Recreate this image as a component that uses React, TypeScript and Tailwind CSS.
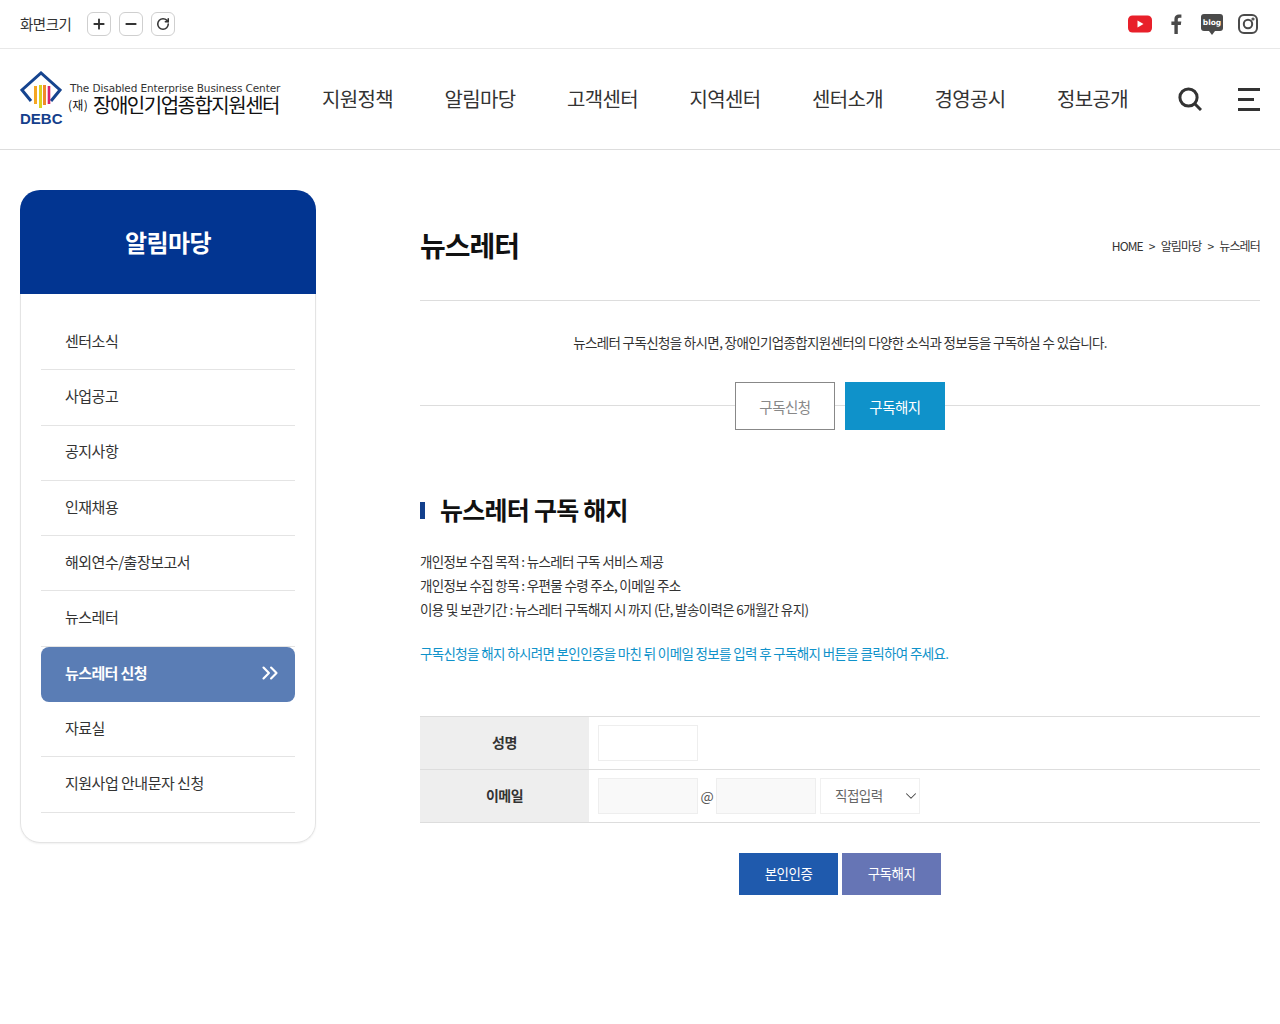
import { ChevronDown, ChevronsRight, Minus, Plus, RotateCw } from 'lucide-react';

const navItems = ['지원정책', '알림마당', '고객센터', '지역센터', '센터소개', '경영공시', '정보공개'];
const sideItems = [
  '센터소식',
  '사업공고',
  '공지사항',
  '인재채용',
  '해외연수/출장보고서',
  '뉴스레터',
  '뉴스레터 신청',
  '자료실',
  '지원사업 안내문자 신청',
];

const zoomBtn =
  'flex h-6 w-6 items-center justify-center rounded-md border border-[#cfcfcf] bg-white text-[#333]';
const inputCls = 'h-9 w-[100px] border border-[#eee]';

function Logo() {
  return (
    <div className="mt-[22px] flex w-[262px] items-start self-start">
      <div className="flex w-[44px] flex-col items-start">
        <svg width="42" height="42" viewBox="0 0 42 42" fill="none">
          <path d="M11 30 L2 19 L21 2 L40 19 L31 30" stroke="#16448f" strokeWidth="3" />
          <path d="M15.5 15 V33" stroke="#f5a623" strokeWidth="3" />
          <path d="M20.5 14 V37" stroke="#dcd21e" strokeWidth="3" />
          <path d="M24.5 14 V34" stroke="#f08a2c" strokeWidth="3" />
          <path d="M29 15 V33" stroke="#d6226f" strokeWidth="2.6" />
        </svg>
        <span className="-mt-[2px] font-['Liberation_Sans',sans-serif] text-[15px] leading-[15px] font-black text-[#153f8c]">
          DEBC
        </span>
      </div>
      <div className="mt-[10px] ml-[4px] whitespace-nowrap">
        <div className="pl-[2px] font-['DejaVu_Sans',sans-serif] text-[10.5px] leading-[15px] tracking-[-0.1px] text-[#333]">
          The Disabled Enterprise Business Center
        </div>
        <div className="flex items-center text-[#111]">
          <span className="text-[12px] leading-[18px] tracking-[0.3px]">(재)</span>
          <span className="ml-[5px] text-[20px] leading-[18px] tracking-[-1.5px]">장애인기업종합지원센터</span>
        </div>
      </div>
    </div>
  );
}

function Socials() {
  return (
    <div className="flex items-center">
      <svg width="24" height="18" viewBox="0 0 24 18">
        <rect width="24" height="17" y="0.5" rx="4.5" fill="#e8202a" />
        <path d="M9.5 5.5 L15.5 9 L9.5 12.5 Z" fill="#fff" />
      </svg>
      <svg width="14" height="20" viewBox="0 0 14 20" className="ml-[17px]">
        <path
          d="M8.8 20 V11 H11.8 L12.3 7.6 H8.8 V5.6 C8.8 4.5 9.2 3.8 10.6 3.8 H12.4 V0.6 C11.9 0.5 11 0.4 9.9 0.4 C7.3 0.4 5.4 2 5.4 5 V7.6 H2.4 V11 H5.4 V20 Z"
          fill="#4a4a4a"
        />
      </svg>
      <div className="relative mb-[3px] ml-[18px] flex h-[17px] w-[22px] items-center justify-center rounded-[3px] bg-[#4a4a4a]">
        <span className="font-['DejaVu_Sans',sans-serif] text-[7.5px] leading-none font-bold text-white">blog</span>
        <span className="absolute top-[17px] left-[8px] h-0 w-0 border-x-[3px] border-t-[4px] border-x-transparent border-t-[#4a4a4a]" />
      </div>
      <svg width="20" height="20" viewBox="0 0 20 20" fill="none" stroke="#4a4a4a" strokeWidth="2" className="ml-[15px]">
        <rect x="1" y="1" width="18" height="18" rx="5" />
        <circle cx="10" cy="10" r="4.2" />
        <circle cx="15" cy="5" r="0.6" fill="#4a4a4a" />
      </svg>
    </div>
  );
}

function Header() {
  return (
    <header>
      <div className="flex h-[49px] items-center justify-between border-b border-[#e8e8e8] pr-[22px] pl-5">
        <div className="flex items-center">
          <span className="mr-[16px] text-[14.5px] tracking-[-0.5px] text-[#333]">화면크기</span>
          <div className="flex gap-2">
            <button className={zoomBtn}>
              <Plus size={16} strokeWidth={2.8} />
            </button>
            <button className={zoomBtn}>
              <Minus size={16} strokeWidth={2.8} />
            </button>
            <button className={zoomBtn}>
              <RotateCw size={14} strokeWidth={2.6} />
            </button>
          </div>
        </div>
        <Socials />
      </div>
      <div className="flex h-[101px] items-center border-b border-[#ddd] pr-5 pl-5">
        <Logo />
        <nav className="ml-[40px] flex gap-[51.5px]">
          {navItems.map((n) => (
            <a key={n} className="text-[20px] leading-none tracking-[-0.65px] text-[#333]">
              {n}
            </a>
          ))}
        </nav>
        <svg width="24" height="24" viewBox="0 0 24 24" fill="none" stroke="#333" strokeWidth="3" className="mr-[36px] ml-auto">
          <circle cx="10.5" cy="10.5" r="8.6" />
          <path d="M16.8 16.8 L23 23" />
        </svg>
        <div className="flex w-[22px] flex-col items-start gap-[7px]">
          <span className="h-[3px] w-[22px] bg-[#333]" />
          <span className="h-[3px] w-[16px] bg-[#333]" />
          <span className="h-[3px] w-[22px] bg-[#333]" />
        </div>
      </div>
    </header>
  );
}

function Sidebar() {
  return (
    <aside className="w-[296px] shrink-0">
      <div className="flex h-[104px] items-center justify-center rounded-t-[20px] bg-[#023591] text-[24px] font-bold tracking-[-0.6px] text-white">
        알림마당
      </div>
      <ul className="rounded-b-[20px] border border-t-0 border-[#e4e4e4] px-5 pt-[21px] pb-[29px] shadow-[0_1px_2px_rgba(0,0,0,0.06)]">
        {sideItems.map((s) =>
          s === '뉴스레터 신청' ? (
            <li
              key={s}
              className="flex h-[55.3px] items-center justify-between rounded-lg bg-[#5a7db5] pr-3 pb-[2px] pl-6 text-[15px] font-bold tracking-[-0.6px] text-white"
            >
              {s}
              <ChevronsRight size={26} strokeWidth={2} />
            </li>
          ) : (
            <li
              key={s}
              className="flex h-[55.3px] items-center border-b border-[#e4e4e4] pb-[2px] pl-6 text-[15px] tracking-[-0.5px] text-[#333]"
            >
              {s}
            </li>
          ),
        )}
      </ul>
    </aside>
  );
}

function Main() {
  return (
    <main className="ml-[104px] w-[840px] shrink-0">
      <div className="flex h-[111px] items-center justify-between border-b border-[#ddd] pb-[1px]">
        <h1 className="text-[28px] font-bold tracking-[-1px] text-[#111]">뉴스레터</h1>
        <div className="mt-[3px] flex items-center gap-[6px] text-[12px] tracking-[-0.85px] text-[#333]">
          <span>HOME</span>
          <span>&gt;</span>
          <span>알림마당</span>
          <span>&gt;</span>
          <span>뉴스레터</span>
        </div>
      </div>
      <p className="mt-[29px] text-center text-[13.5px] leading-[24px] tracking-[-0.65px] text-[#333]">
        뉴스레터 구독신청을 하시면, 장애인기업종합지원센터의 다양한 소식과 정보등을 구독하실 수 있습니다.
      </p>
      <div className="mt-[28px] flex items-center">
        <span className="mb-[1px] h-px flex-1 bg-[#ddd]" />
        <button className="h-12 w-[100px] border border-[#888] pt-[2px] text-[14.5px] tracking-[-0.5px] text-[#888]">구독신청</button>
        <span className="mb-[1px] h-px w-[10px] bg-[#ddd]" />
        <button className="h-12 w-[100px] bg-[#0f92ca] pt-[2px] text-[14.5px] tracking-[-0.5px] text-white">구독해지</button>
        <span className="mb-[1px] h-px flex-1 bg-[#ddd]" />
      </div>
      <h2 className="mt-[61px] flex h-[38px] items-center text-[25px] font-bold tracking-[-0.75px] text-[#111]">
        <span className="mr-[15px] h-[17px] w-[5px] bg-[#123f8c]" />
        뉴스레터 구독 해지
      </h2>
      <div className="mt-[20px] text-[13.5px] leading-[24px] tracking-[-0.65px] text-[#333]">
        <p>개인정보 수집 목적 : 뉴스레터 구독 서비스 제공</p>
        <p>개인정보 수집 항목 : 우편물 수령 주소, 이메일 주소</p>
        <p>이용 및 보관기간 : 뉴스레터 구독해지 시 까지 (단, 발송이력은 6개월간 유지)</p>
        <p className="mt-[20px] text-[#0f92ca]">
          구독신청을 해지 하시려면 본인인증을 마친 뒤 이메일 정보를 입력 후 구독해지 버튼을 클릭하여 주세요.
        </p>
      </div>
      <div className="mt-[51px] border-t border-[#ddd] text-[14px]">
        <div className="flex h-[53px] border-b border-[#ddd]">
          <div className="flex w-[169px] items-center justify-center bg-[#eee] pb-[2px] font-bold tracking-[-0.5px] text-[#333]">성명</div>
          <div className="flex items-center pl-[9px]">
            <div className={inputCls} />
          </div>
        </div>
        <div className="flex h-[53px] border-b border-[#ddd]">
          <div className="flex w-[169px] items-center justify-center bg-[#eee] pb-[2px] font-bold tracking-[-0.5px] text-[#333]">이메일</div>
          <div className="flex items-center pl-[9px]">
            <div className={`${inputCls} bg-[#f9f9f9]`} />
            <span className="w-[18px] text-center text-[14px] text-[#555]">@</span>
            <div className={`${inputCls} bg-[#f9f9f9]`} />
            <div className="ml-[4px] flex h-9 w-[100px] items-center justify-between border border-[#f0f0f0] pb-[1px] pl-[14px] text-[13.5px] text-[#666]">
              <span className="tracking-[-0.5px]">직접입력</span>
              <ChevronDown size={18} strokeWidth={1.4} className="-mr-[1px] text-[#444]" />
            </div>
          </div>
        </div>
      </div>
      <div className="mt-[30px] flex justify-center gap-[4px]">
        <button className="h-[42px] w-[99px] bg-[#1f5aad] pb-[2px] text-[13.5px] tracking-[-0.5px] text-white">본인인증</button>
        <button className="h-[42px] w-[99px] bg-[#6675b5] pb-[2px] text-[13.5px] tracking-[-0.5px] text-white">구독해지</button>
      </div>
    </main>
  );
}

export default function App() {
  return (
    <div className="min-h-[1024px] bg-white font-['Noto_Sans_CJK_KR','Noto_Sans',sans-serif]">
      <Header />
      <div className="flex px-5 pt-10">
        <Sidebar />
        <Main />
      </div>
    </div>
  );
}
